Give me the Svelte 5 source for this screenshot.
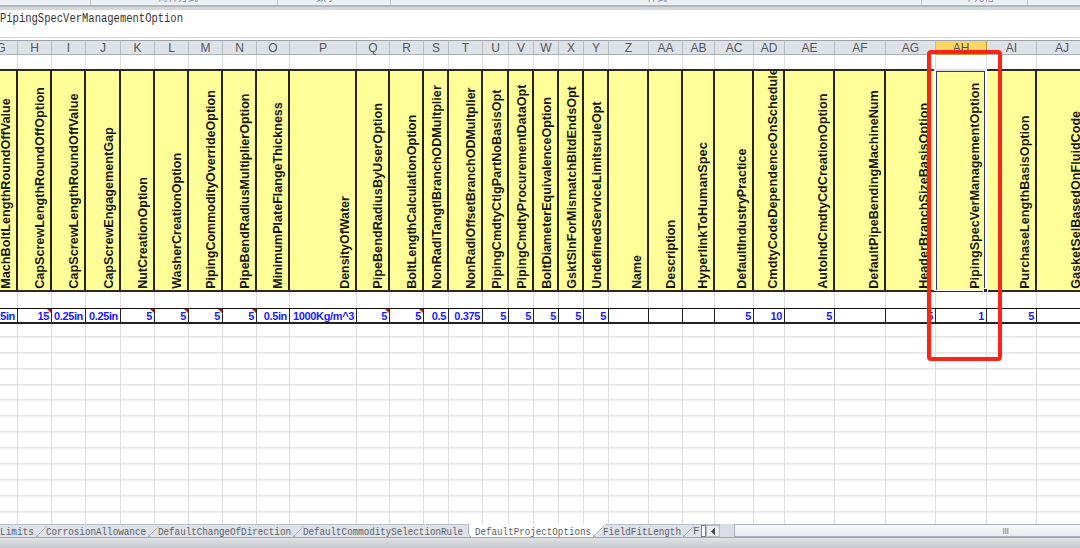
<script lang="ts">
	type Column = {
		id: string;
		right: number;
		title: string;
		top: number;
		value?: string;
		note?: boolean;
	};

	// right = x of the column's right border, top = where its title ends
	const columns: Column[] = [
		{ id: "G", right: 17, title: "MachBoltLengthRoundOffValue", top: 98, value: "0.25in" },
		{ id: "H", right: 51, title: "CapScrewLengthRoundOffOption", top: 87, value: "15", note: true },
		{ id: "I", right: 85, title: "CapScrewLengthRoundOffValue", top: 93.3, value: "0.25in" },
		{ id: "J", right: 120, title: "CapScrewEngagementGap", top: 127, value: "0.25in" },
		{ id: "K", right: 154, title: "NutCreationOption", top: 177, value: "5", note: true },
		{ id: "L", right: 188, title: "WasherCreationOption", top: 152.7, value: "5", note: true },
		{ id: "M", right: 222, title: "PipingCommodityOverrideOption", top: 90, value: "5", note: true },
		{ id: "N", right: 256, title: "PipeBendRadiusMultiplierOption", top: 93.3, value: "5", note: true },
		{ id: "O", right: 289, title: "MinimumPlateFlangeThickness", top: 102, value: "0.5in" },
		{ id: "P", right: 356, title: "DensityOfWater", top: 196, value: "1000Kg/m^3" },
		{ id: "Q", right: 389, title: "PipeBendRadiusByUserOption", top: 102.7, value: "5", note: true },
		{ id: "R", right: 423, title: "BoltLengthCalculationOption", top: 114.7, value: "5", note: true },
		{ id: "S", right: 448, title: "NonRadlTangtlBranchODMultplier", top: 85, value: "0.5" },
		{ id: "T", right: 482, title: "NonRadlOffsetBranchODMultplier", top: 87.3, value: "0.375" },
		{ id: "U", right: 508, title: "PipingCmdtyCtlgPartNoBasisOpt", top: 89.3, value: "5" },
		{ id: "V", right: 533, title: "PipingCmdtyProcurementDataOpt", top: 84.3, value: "5" },
		{ id: "W", right: 558, title: "BoltDiameterEquivalenceOption", top: 97, value: "5" },
		{ id: "X", right: 583, title: "GsktSlnForMismatchBltdEndsOpt", top: 86, value: "5" },
		{ id: "Y", right: 608, title: "UndefinedServiceLimitsruleOpt", top: 101.3, value: "5" },
		{ id: "Z", right: 648, title: "Name", top: 255 },
		{ id: "AA", right: 682, title: "Description", top: 219.7 },
		{ id: "AB", right: 714, title: "HyperlinkToHumanSpec", top: 142 },
		{ id: "AC", right: 753, title: "DefaultIndustryPractice", top: 148.3, value: "5" },
		{ id: "AD", right: 784, title: "CmdtyCodeDependenceOnSchedule", top: 68, value: "10" },
		{ id: "AE", right: 834, title: "AutoIndCmdtyCdCreationOption", top: 93.3, value: "5" },
		{ id: "AF", right: 885, title: "DefaultPipeBendingMachineNum", top: 90 },
		{ id: "AG", right: 935, title: "HeaderBranchSizeBasisOption", top: 102.7, value: "5" },
		{ id: "AH", right: 986, title: "PipingSpecVerManagementOption", top: 82.7, value: "1" },
		{ id: "AI", right: 1036, title: "PurchaseLengthBasisOption", top: 115.3, value: "5" },
		{ id: "AJ", right: 1087, title: "GasketSelBasedOnFluidCode", top: 110.7 },
	];
	const leftEdge = -16;
	const selected = "AH";

	const cells = columns.map((c, i) => ({
		...c,
		width: c.right - (i ? columns[i - 1].right : leftEdge),
	}));

	const tabs = [
		{ name: "Limits", width: 46, text: 34 },
		{ name: "CorrosionAllowance", width: 112, text: 100 },
		{ name: "DefaultChangeOfDirection", width: 145, text: 133 },
		{ name: "DefaultCommoditySelectionRule", width: 172, text: 160 },
		{ name: "DefaultProjectOptions", width: 128, text: 116 },
		{ name: "FieldFitLength", width: 90, text: 78 },
	];
	const current = 4;
</script>

<div class="window">
	<div class="ribbon">
		<div class="group" style:width="91px"></div>
		<div class="group" style:width="187px"><span style:margin-left="67px">对齐方式</span></div>
		<div class="group" style:width="113px"><span style:margin-left="38px">数字</span></div>
		<div class="group" style:width="531px"><span style:margin-left="256px">样式</span></div>
		<div class="group" style:width="106px"><span style:margin-left="42px">单元格</span></div>
		<div class="group last"></div>
	</div>

	<div class="formula">
		<svg width="200" height="20">
			<text x="0" y="10.500" textLength="183" lengthAdjust="spacingAndGlyphs">PipingSpecVerManagementOption</text>
		</svg>
	</div>

	<div class="sheet">
		<div class="row heads">
			{#each cells as cell}
				<div class="cell" class:active={cell.id === selected} style:width="{cell.width}px">{cell.id}</div>
			{/each}
		</div>
		<div class="row blank">
			{#each cells as cell}
				<div class="cell" style:width="{cell.width}px"></div>
			{/each}
		</div>
		<div class="row titles">
			{#each cells as cell}
				<div class="cell" style:width="{cell.width}px">
					<svg width={cell.width} height="220">
						<text
							transform="translate({cell.width - 7.8} 217.8) rotate(-90)"
							textLength={288.6 - cell.top}
							lengthAdjust="spacingAndGlyphs">{cell.title}</text>
					</svg>
					{#if cell.id === selected}
						<div class="selection"></div>
						<i class="handle"></i>
					{/if}
				</div>
			{/each}
		</div>
		<div class="row gap">
			{#each cells as cell}
				<div class="cell" style:width="{cell.width}px"></div>
			{/each}
		</div>
		<div class="row values">
			{#each cells as cell}
				<div class="cell" class:note={cell.note} style:width="{cell.width}px">{cell.value ?? ""}</div>
			{/each}
		</div>
		<div class="row empty">
			{#each cells as cell}
				<div class="cell" style:width="{cell.width}px"></div>
			{/each}
		</div>
		<div class="marker"></div>
	</div>

	<div class="bottom">
		<div class="tabs">
			{#each tabs as tab, i}
				<div class="tab" style:width="{tab.width}px">
					<svg width={tab.width} height="12">
						{#if i === current}
							<path class="page" d="M-6 -1H{tab.width + 3}L{tab.width - 9} 12H-3L-6 9z" />
						{/if}
						<text x="0" y="10" textLength={tab.text} lengthAdjust="spacingAndGlyphs">{tab.name}</text>
						{#if i === current - 1}
							<path class="slash" d="M165.500 0V9L168 12" />
						{:else}
							<path class="slash" d="M{tab.width - 10} 12L{tab.width + 1} 1M{tab.width - 10} 9.500l2.500 2.500" />
						{/if}
					</svg>
				</div>
			{/each}
			<div class="tab rest">F</div>
			<div class="split"></div>
			<div class="arrow"><svg width="12" height="11"><path d="M8 1.500v8L4 5.500z" /></svg></div>
		</div>
		<div class="scroll"><div class="grip"></div></div>
	</div>
	<div class="status"></div>
</div>

<style>
	:global(body) {
		overflow: hidden;
	}
	.window {
		width: 1080px;
		height: 548px;
		display: flex;
		flex-direction: column;
		overflow: hidden;
		background: #fff;
		font-family: "Liberation Sans", Arial, sans-serif;
	}
	.ribbon {
		flex: none;
		display: flex;
		height: 5px;
		overflow: hidden;
		background: #eceff4;
		border-bottom: 2px solid #b3b8bc;
		box-shadow: 0 3px 0 #d4d8da;
		position: relative;
	}
	.group {
		flex: none;
		box-sizing: border-box;
		border-right: 1px solid #c4c9cf;
		height: 5px;
	}
	.group.last {
		border: 0;
	}
	.group span {
		display: block;
		font: 10px/12px "Noto Sans CJK SC", sans-serif;
		color: #7c8794;
		margin-top: -9px;
		white-space: nowrap;
	}
	.formula {
		flex: none;
		height: 31px;
		padding-top: 4px;
		box-sizing: border-box;
		border-bottom: 1px solid #d3d7dc;
		margin-bottom: 2px;
	}
	.formula svg {
		display: block;
		overflow: visible;
	}
	.formula text {
		font: 12px "Liberation Mono", monospace;
		fill: #333;
	}
	.sheet {
		position: relative;
		height: 484px;
		flex: none;
		margin-left: -15px;
		width: 1103px;
		border-top: 1px solid #9ba2ad;
		display: flex;
		flex-direction: column;
		box-sizing: border-box;
	}
	.row {
		display: flex;
		flex: none;
	}
	.cell {
		flex: none;
		box-sizing: border-box;
		border-right: 1px solid #dcdcde;
	}
	.heads {
		height: 14px;
		box-sizing: border-box;
		background: #dee2e7;
		border-bottom: 1px solid #aab0b8;
	}
	.heads .cell {
		font-size: 12px;
		line-height: 14px;
		text-align: center;
		color: #50555c;
		border-color: #b6bbc3;
	}
	.heads .active {
		height: 14px;
		background: linear-gradient(#fbd466, #fdd75c);
		border-color: #c99b3a;
		border-bottom: 1px solid #c99b3a;
	}
	.blank {
		height: 14px;
	}
	.titles {
		height: 223px;
		box-sizing: border-box;
		background: #ffff99;
		border-top: 2px solid #2a2a22;
		border-bottom: 2px solid #2a2a22;
	}
	.titles .cell {
		position: relative;
		border-right: 2px solid #24241c;
	}
	.titles svg {
		display: block;
	}
	.titles text {
		font: bold 13px "Liberation Sans", Arial, sans-serif;
		fill: #16160e;
	}
	.gap {
		height: 16px;
	}
	.values {
		height: 16px;
		box-sizing: border-box;
		border-top: 1px solid #111;
		border-bottom: 2px solid #222;
	}
	.values .cell {
		position: relative;
		display: flex;
		justify-content: flex-end;
		padding-right: 2px;
		font-weight: bold;
		font-size: 11px;
		letter-spacing: -0.350px;
		line-height: 14px;
		color: #1a1aff;
		border-color: #222;
		white-space: nowrap;
	}
	.note::after {
		content: "";
		position: absolute;
		right: 0;
		top: 0;
		border-top: 4px solid #f00;
		border-left: 4px solid transparent;
	}
	.empty {
		flex: 1;
		background: repeating-linear-gradient(transparent 0 14.900px, #d6d6d8 14.900px 15.900px);
		background-position: 0 -2.600px;
	}
	.selection {
		position: absolute;
		box-sizing: border-box;
		left: -2px;
		right: -2px;
		top: -2px;
		bottom: -1px;
		border: 2px solid #fff;
		border-top-color: #dcdcf0;
		border-bottom-width: 1px;
		box-shadow: inset 0 1px #34346e, inset 1px 0 #34346e, inset -1px 0 #34346e;
	}
	.handle {
		position: absolute;
		right: -3px;
		bottom: -3px;
		width: 3px;
		height: 3px;
		border: 1px solid #fff;
		background: #223;
	}
	.marker {
		position: absolute;
		box-sizing: border-box;
		left: 942px;
		top: 9px;
		width: 75px;
		height: 311px;
		border: 4px solid #fb2418;
		border-radius: 4px;
	}
	.bottom {
		flex: none;
		height: 14px;
		display: flex;
		background: #d8dde6;
		position: relative;
		border-bottom: 1px solid #9fa6ae;
		box-sizing: border-box;
	}
	.tabs {
		flex: none;
		width: 720px;
		display: flex;
		background: #dfe2e8;
		border-top: 1px solid #b9bfc6;
		box-sizing: border-box;
	}
	.tab {
		flex: none;
		height: 12px;
	}
	.tab svg {
		display: block;
		overflow: visible;
	}
	.tab text,
	.rest {
		font: 11px/12px "Liberation Mono", monospace;
		fill: #5a6067;
		color: #5a6067;
	}
	.page {
		fill: #fff;
	}
	.slash {
		fill: none;
		stroke: #a9afb7;
	}
	.rest {
		width: 8px;
	}
	.split {
		width: 5px;
		border: 1px solid #777d86;
		background: #fff;
		box-sizing: border-box;
	}
	.arrow {
		flex: 1;
		background: #e9ecf1;
		border: 1px solid #b3b9c2;
	}
	.arrow svg {
		display: block;
		fill: #444a52;
	}
	.scroll {
		flex: 1;
		margin-left: 14px;
		border: 1px solid #a9b0b9;
		border-right: 0;
		background: linear-gradient(#f5f9fc, #e8ecf1);
		box-sizing: border-box;
	}
	.grip {
		width: 6px;
		height: 6px;
		margin: 3px 0 0 268px;
		background: repeating-linear-gradient(90deg, #a5a9ae 0 1px, #d0d3d7 1px 2px);
	}
	.status {
		flex: 1;
		background: linear-gradient(#e1e3e6, #c5c9cd);
	}
</style>
